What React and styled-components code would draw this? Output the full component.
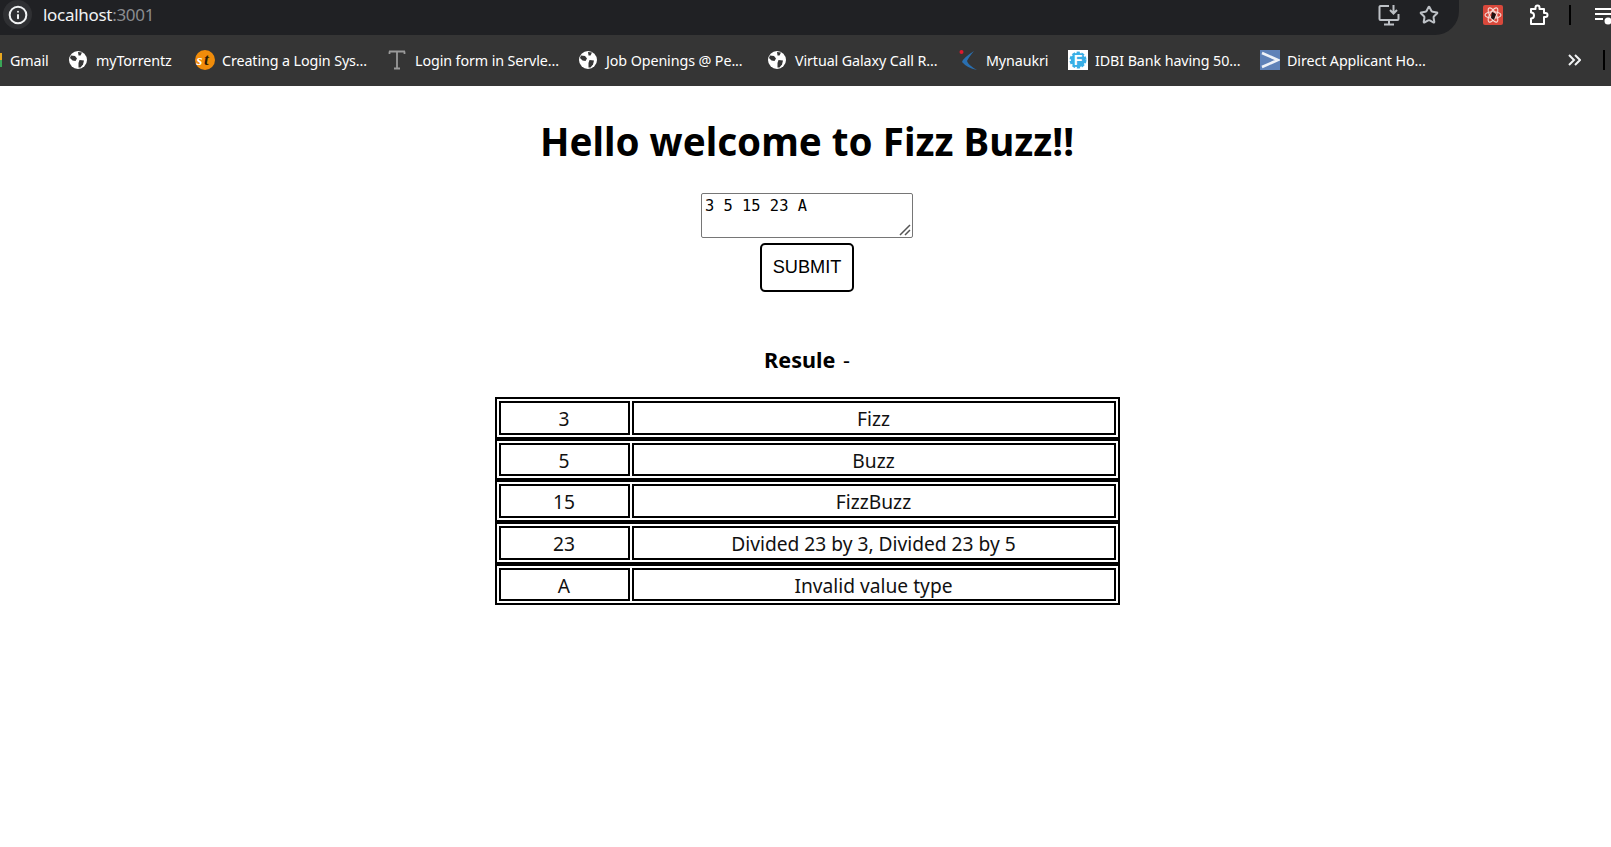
import React from "react";
import styled, { createGlobalStyle } from "styled-components";
import { Info, Star } from "lucide-react";

const bookmarks = [
  { icon: "gmail", label: "Gmail", width: 37 },
  { icon: "globe", label: "myTorrentz", width: 77 },
  { icon: "st", label: "Creating a Login Sys...", width: 144 },
  { icon: "type", label: "Login form in Servle...", width: 142 },
  { icon: "globe", label: "Job Openings @ Pe...", width: 140 },
  { icon: "globe", label: "Virtual Galaxy Call R...", width: 142 },
  { icon: "kite", label: "Mynaukri", width: 60 },
  { icon: "idbi", label: "IDBI Bank having 50...", width: 143 },
  { icon: "arrow", label: "Direct Applicant Ho...", width: 142 },
];

const results = [
  ["3", "Fizz"],
  ["5", "Buzz"],
  ["15", "FizzBuzz"],
  ["23", "Divided 23 by 3, Divided 23 by 5"],
  ["A", "Invalid value type"],
];

const BookmarkIcon = ({ name }) => {
  if (name === "gmail") return <GmailSliver />;
  if (name === "globe")
    return (
      <svg width="18" height="18" viewBox="0 0 18 18">
        <circle cx="9" cy="9" r="9" fill="#fff" />
        <path d="M2 4.500 6 5 8 7.500 6.500 10 3.500 9.500 1 7Z" fill="#353535" />
        <path d="M9 1 13 1.500 11.500 4.500 9.500 4.500Z" fill="#353535" />
        <path d="M10.500 9 15 9.500 14 13.500 11.500 16.500 9.500 16.500 9.500 12Z" fill="#353535" />
      </svg>
    );
  if (name === "st")
    return (
      <svg width="20" height="20" viewBox="0 0 20 20">
        <circle cx="10" cy="10" r="10" fill="#f08c0a" />
        <text x="1.500" y="15" fontFamily="Liberation Serif" fontStyle="italic" fontWeight="700" fontSize="15" fill="#fff">s</text>
        <text x="9" y="15" fontFamily="Liberation Serif" fontStyle="italic" fontWeight="700" fontSize="17" fill="#2a1a05">t</text>
      </svg>
    );
  if (name === "type")
    return (
      <svg width="18" height="20" viewBox="0 0 18 20">
        <path d="M1 1.500H17M9 1.500V18M6 18.500H12M1.500 1.500V4M16.500 1.500V4" fill="none" stroke="#9a9a9a" strokeWidth="1.800" />
      </svg>
    );
  if (name === "kite")
    return (
      <svg width="18" height="20" viewBox="0 0 18 20">
        <path d="M15 1Q4 8 3 12 8 18 18 20 9 15 8 11 10 7 15 1Z" fill="#2a6fb0" />
        <circle cx="2.500" cy="2" r="2" fill="#e0182d" />
      </svg>
    );
  if (name === "idbi")
    return (
      <svg width="20" height="20" viewBox="0 0 20 20">
        <rect width="20" height="20" fill="#fff" />
        <circle cx="10" cy="10" r="7" fill="#38aee6" stroke="#38aee6" strokeWidth="3" strokeDasharray="3 1.500" />
        <circle cx="10" cy="10" r="7" fill="#38aee6" />
        <text x="10" y="15" textAnchor="middle" fontFamily="Liberation Sans" fontWeight="700" fontSize="14" fill="#fff">F</text>
      </svg>
    );
  return (
    <svg width="20" height="20" viewBox="0 0 20 20">
      <rect width="20" height="20" fill="#5f82b8" />
      <path d="M2 3 18 10 2 17" fill="none" stroke="#eef2f8" strokeWidth="2.600" />
    </svg>
  );
};

const App = () => (
  <>
    <GlobalStyle />
    <Chrome>
      <TopBar>
        <AddressPill>
          <InfoBadge>
            <Info size={20} color="#f1f3f4" strokeWidth={2.4} />
          </InfoBadge>
          <Url>
            localhost<UrlPort>:3001</UrlPort>
          </Url>
          <PillActions>
            <svg width="22" height="22" viewBox="0 0 22 22" fill="none" stroke="#bdc1c6" strokeWidth="2">
              <path d="M11 2H2.500A1 1 0 0 0 1.500 3V15A1 1 0 0 0 2.500 16H19.500A1 1 0 0 0 20.500 15V10" />
              <path d="M11 16V20M6 20.500H16" />
              <path d="M15.500 1V9M12 6l3.500 3.500L19 6" />
            </svg>
            <Star size={20} color="#bdc1c6" strokeWidth={2.4} />
          </PillActions>
        </AddressPill>
        <ExtensionArea>
          <ReactExt>
            <svg width="18" height="18" viewBox="0 0 18 18" fill="none" stroke="#f6dcd6" strokeWidth="1.100">
              <ellipse cx="9" cy="9" rx="8" ry="3.200" />
              <ellipse cx="9" cy="9" rx="8" ry="3.200" transform="rotate(60 9 9)" />
              <ellipse cx="9" cy="9" rx="8" ry="3.200" transform="rotate(120 9 9)" />
              <path d="M8 6 12 8 10 14 7 12Z" fill="#1b1111" stroke="none" />
            </svg>
          </ReactExt>
          <svg width="22" height="22" viewBox="0 0 22 22" fill="none" stroke="#fff" strokeWidth="2" strokeLinejoin="round">
            <path d="M4 5H8.500V3.500A2 2 0 0 1 12.500 3.500V5H17V9H18.500A2 2 0 0 1 18.500 13H17V20H4V14.500A2.500 2.500 0 0 0 4 8.500Z" />
          </svg>
          <Divider $left={20} $right={24} />
          <svg width="16" height="22" viewBox="0 0 16 22" fill="none" stroke="#fff" strokeWidth="2">
            <path d="M0 5H16M0 10H16M0 15H8" />
            <circle cx="13" cy="17" r="2.500" fill="#fff" />
          </svg>
        </ExtensionArea>
      </TopBar>
      <BookmarkBar>
        {bookmarks.map((b) => (
          <Bookmark key={b.label}>
            <IconSlot $width={b.icon === "gmail" ? 3 : 20}>
              <BookmarkIcon name={b.icon} />
            </IconSlot>
            <BookmarkLabel $width={b.width}>{b.label}</BookmarkLabel>
          </Bookmark>
        ))}
        <Overflow>
          <svg width="13" height="12" viewBox="0 0 13 12" fill="none" stroke="#f1f3f4" strokeWidth="2">
            <path d="M1 1 6 6 1 11M7 1 12 6 7 11" />
          </svg>
          <Divider $left={22} $right={6} />
        </Overflow>
      </BookmarkBar>
    </Chrome>
    <Page>
      <Title>Hello welcome to Fizz Buzz!!</Title>
      <InputWrap>
        <NumberInput defaultValue="3 5 15 23 A" />
        <ResizeGrip width="12" height="12" viewBox="0 0 12 12" fill="none" stroke="#555" strokeWidth="1.500">
          <path d="M1 11 11 1M6 11 11 6" />
        </ResizeGrip>
      </InputWrap>
      <SubmitButton>SUBMIT</SubmitButton>
      <ResultHeading>
        <b>Resule</b> -
      </ResultHeading>
      <ResultList>
        {results.map(([value, text]) => (
          <ResultRow key={value}>
            <ResultCell>{value}</ResultCell>
            <ResultCell>{text}</ResultCell>
          </ResultRow>
        ))}
      </ResultList>
    </Page>
  </>
);

export default App;

const GlobalStyle = createGlobalStyle`
  html, body {
    margin: 0;
    padding: 0;
    background: #fff;
  }
  body {
    font-family: "Noto Sans", "Open Sans", sans-serif;
    overflow: hidden;
  }
`;

const Chrome = styled.div`
  background-color: #353535;
  height: 86px;
`;

const TopBar = styled.div`
  display: flex;
  height: 35px;
`;

const AddressPill = styled.div`
  width: 1459px;
  height: 35px;
  display: flex;
  align-items: center;
  background-color: #202124;
  border-radius: 0 0 24px 0;
  padding: 0 20px 6px 3px;
  box-sizing: border-box;
`;

const InfoBadge = styled.div`
  width: 29px;
  height: 29px;
  border-radius: 50%;
  background-color: #2f3033;
  display: flex;
  align-items: center;
  justify-content: center;
`;

const Url = styled.div`
  margin-left: 11px;
  font-size: 17px;
  letter-spacing: -0.3px;
  color: #f1f3f4;
`;

const UrlPort = styled.span`
  color: #8b8d90;
`;

const PillActions = styled.div`
  margin-left: auto;
  display: flex;
  align-items: center;
  gap: 19px;
`;

const ExtensionArea = styled.div`
  display: flex;
  align-items: center;
  flex: 1;
  padding: 0 0 6px 24px;
`;

const ReactExt = styled.div`
  width: 20px;
  height: 20px;
  background-color: #d9483b;
  border-radius: 2px;
  display: flex;
  align-items: center;
  justify-content: center;
  margin-right: 24px;
`;

const Divider = styled.div`
  width: 2px;
  height: 20px;
  background-color: #000;
  margin: 0 ${(p) => p.$right}px 0 ${(p) => p.$left}px;
`;

const BookmarkBar = styled.div`
  display: flex;
  align-items: center;
  height: 50px;
  gap: 22px;
`;

const Bookmark = styled.div`
  display: flex;
  align-items: center;
  gap: 7px;
`;

const IconSlot = styled.div`
  display: flex;
  align-items: center;
  width: ${(p) => p.$width}px;
`;

const GmailSliver = styled.span`
  width: 2px;
  height: 14px;
  background: linear-gradient(#e9a81f 50%, #3aa757 50%);
`;

const BookmarkLabel = styled.span`
  width: ${(p) => p.$width}px;
  font-size: 14.3px;
  letter-spacing: -0.1px;
  color: #fff;
  white-space: nowrap;
`;

const Overflow = styled.div`
  margin-left: auto;
  display: flex;
  align-items: center;
`;

const Page = styled.main`
  display: flex;
  flex-direction: column;
  align-items: center;
  padding-left: 3px;
  color: #000;
`;

const Title = styled.h1`
  margin: 28px 0 0;
  font-size: 38.6px;
  line-height: 54px;
  font-weight: 700;
`;

const InputWrap = styled.div`
  position: relative;
  margin-top: 25px;
  height: 45px;
`;

const NumberInput = styled.textarea`
  display: block;
  width: 212px;
  height: 45px;
  box-sizing: border-box;
  padding: 3px;
  border: 1px solid #767676;
  border-radius: 2px;
  font-family: "DejaVu Sans Mono", "Liberation Mono", monospace;
  font-size: 15.4px;
  line-height: 18px;
  overflow: hidden;
  resize: none;
`;

const ResizeGrip = styled.svg`
  position: absolute;
  right: 2px;
  bottom: 2px;
`;

const SubmitButton = styled.button`
  margin-top: 5px;
  width: 94px;
  height: 49px;
  background: #fff;
  border: 2px solid #000;
  border-radius: 5px;
  font-family: "Liberation Sans", Arial, sans-serif;
  font-size: 18.2px;
  color: #000;
`;

const ResultHeading = styled.h3`
  margin: 53px 0 0;
  font-size: 21.6px;
  line-height: 30px;
  font-weight: 400;
  word-spacing: 2px;
  b {
    font-weight: 700;
  }
`;

const ResultList = styled.div`
  margin-top: 22px;
  width: 625px;
  display: flex;
  flex-direction: column;
`;

const ResultRow = styled.div`
  display: grid;
  grid-template-columns: 131px 1fr;
  gap: 2px;
  height: 41.7px;
  box-sizing: border-box;
  padding: 2px;
  border: 2px solid #000;
`;

const ResultCell = styled.div`
  border: 2px solid #000;
  padding-top: 1px;
  display: flex;
  align-items: center;
  justify-content: center;
  font-size: 19.2px;
  color: #111;
`;
